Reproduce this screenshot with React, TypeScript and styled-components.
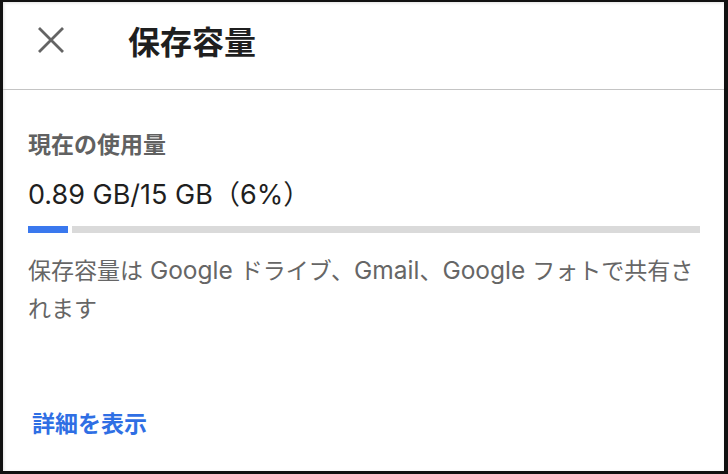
import React from "react";
import styled, { createGlobalStyle } from "styled-components";

const Global = createGlobalStyle`
  html, body { margin: 0; padding: 0; background: #000; }
  body { font-family: Inter, "Noto Sans CJK JP", sans-serif; }
  * { box-sizing: border-box; }
`;

const Frame = styled.div`
  width: 728px;
  height: 474px;
  background: #fff;
  border-style: solid;
  border-color: #111;
  border-width: 2px 4px 3px 3px;
  display: flex;
  flex-direction: column;
  overflow: hidden;
  box-shadow: inset 1px 1px 3px rgba(0, 0, 0, 0.12);
`;

const Header = styled.header`
  height: 88px;
  display: flex;
  align-items: center;
  border-bottom: 1px solid #c4c4c4;
  padding: 0 0 12px 34px;
  flex-shrink: 0;
`;

const CloseButton = styled.button`
  width: 28px;
  height: 28px;
  padding: 0;
  border: none;
  background: none;
  display: flex;
  align-items: center;
  justify-content: center;
  color: #646464;
  margin-right: 63px;
`;

const Title = styled.h1`
  margin: 0;
  font-family: "Noto Sans CJK JP", sans-serif;
  font-size: 32px;
  font-weight: 700;
  color: #1f1f1f;
  line-height: 40px;
`;

const Body = styled.main`
  flex: 1;
  display: flex;
  flex-direction: column;
  padding: 37px 24px 0 25px;
`;

const SectionLabel = styled.h2`
  margin: 0;
  font-family: "Noto Sans CJK JP", sans-serif;
  font-size: 23px;
  font-weight: 700;
  color: #616161;
  line-height: 32px;
`;

const Usage = styled.div`
  margin-top: 19px;
  font-family: Inter, "Noto Sans CJK JP", sans-serif;
  font-size: 27px;
  color: #1f1f1f;
  line-height: 34px;
`;

const Bar = styled.div`
  margin-top: 14px;
  display: flex;
  gap: 4px;
  height: 7px;
`;

const Segment = styled.div<{ $color: string }>`
  height: 100%;
  background: ${(p) => p.$color};
`;

const Rest = styled(Segment)`
  flex: 1;
`;

const Description = styled.p`
  margin: 19px 0 0;
  font-size: 23px;
  line-height: 38px;
  color: #666666;
`;

const Run = styled.span<{ $latin?: boolean }>`
  font-family: ${(p) => (p.$latin ? "Inter, sans-serif" : '"Noto Sans CJK JP", sans-serif')};
  font-size: ${(p) => (p.$latin ? "24.5px" : "23px")};
  line-height: 1;
`;

const DetailLink = styled.a`
  margin-top: 78px;
  margin-left: 4px;
  font-family: "Noto Sans CJK JP", sans-serif;
  font-size: 23px;
  font-weight: 700;
  color: #2f6fe4;
  text-decoration: none;
  line-height: 32px;
  align-self: flex-start;
`;

export default function App() {
  const usedPct = 6;
  return (
    <>
      <Global />
      <Frame>
        <Header>
          <CloseButton aria-label="閉じる">
            <svg width="28" height="28" viewBox="0 0 28 28">
              <path d="M2 2 L26 26 M26 2 L2 26" stroke="currentColor" strokeWidth="2.8" fill="none" />
            </svg>
          </CloseButton>
          <Title>保存容量</Title>
        </Header>
        <Body>
          <SectionLabel>現在の使用量</SectionLabel>
          <Usage>0.89 GB/15 GB（{usedPct}%）</Usage>
          <Bar>
            <Segment $color="#3a78ee" style={{ width: 40 }} />
            <Rest $color="#dadada" />
          </Bar>
          <Description>
            <Run>保存容量は</Run>
            <Run $latin> Google </Run>
            <Run>ドライブ、</Run>
            <Run $latin>Gmail</Run>
            <Run>、</Run>
            <Run $latin>Google </Run>
            <Run>フォトで共有さ</Run>
            <Run>れます</Run>
          </Description>
          <DetailLink href="#">詳細を表示</DetailLink>
        </Body>
      </Frame>
    </>
  );
}
